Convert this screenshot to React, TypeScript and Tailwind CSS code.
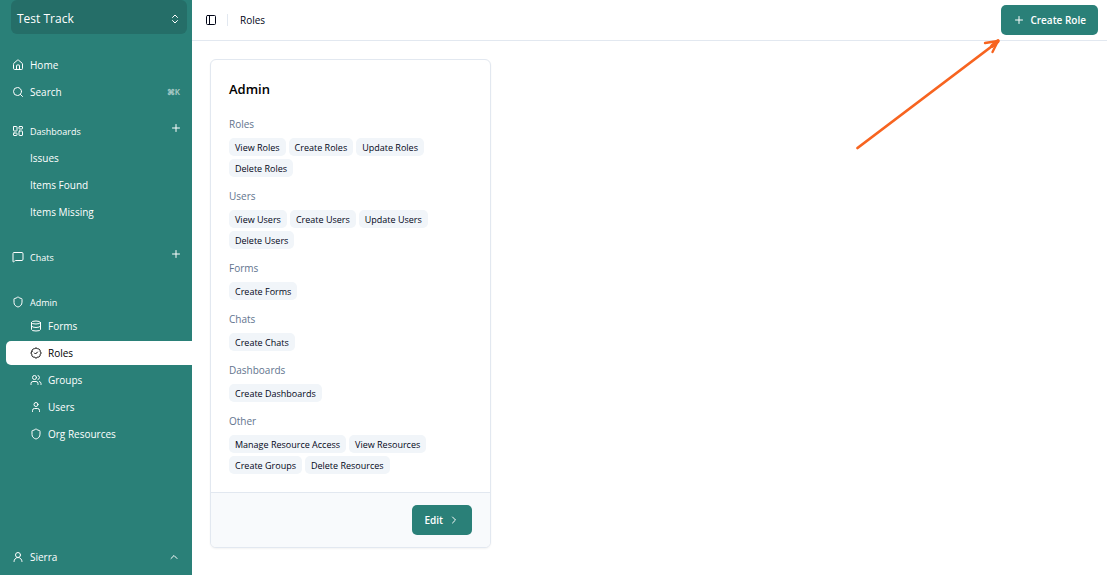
import type { ReactNode } from "react";
import {
  BadgeCheck,
  ChevronRight,
  ChevronUp,
  ChevronsUpDown,
  Database,
  House,
  LayoutDashboard,
  MessageSquare,
  PanelLeft,
  Plus,
  Search,
  Shield,
  User,
  UserRound,
  Users,
  type LucideIcon,
} from "lucide-react";

type Section = { label: string; permissions: string[] };

const sections: Section[] = [
  { label: "Roles", permissions: ["View Roles", "Create Roles", "Update Roles", "Delete Roles"] },
  { label: "Users", permissions: ["View Users", "Create Users", "Update Users", "Delete Users"] },
  { label: "Forms", permissions: ["Create Forms"] },
  { label: "Chats", permissions: ["Create Chats"] },
  { label: "Dashboards", permissions: ["Create Dashboards"] },
  {
    label: "Other",
    permissions: ["Manage Resource Access", "View Resources", "Create Groups", "Delete Resources"],
  },
];

const adminLinks: { label: string; icon: LucideIcon; active?: boolean }[] = [
  { label: "Forms", icon: Database },
  { label: "Roles", icon: BadgeCheck, active: true },
  { label: "Groups", icon: Users },
  { label: "Users", icon: User },
  { label: "Org Resources", icon: Shield },
];

function NavLink({ icon: Icon, children, hint }: { icon: LucideIcon; children: ReactNode; hint?: string }) {
  return (
    <a href="#" className="flex h-6 items-center gap-1.5 px-1.5">
      <Icon className="size-3" />
      <span>{children}</span>
      {hint && <kbd className="ml-auto font-sans text-[8px] font-semibold opacity-60">{hint}</kbd>}
    </a>
  );
}

function GroupHeading({ icon: Icon, label, addLabel }: { icon: LucideIcon; label: string; addLabel?: string }) {
  return (
    <div className="flex h-6 items-center gap-1.5 pl-1.5 pr-1">
      <Icon className="size-3" />
      <h2 className="pt-px text-[9px]">{label}</h2>
      {addLabel && (
        <button type="button" aria-label={addLabel} className="mb-1.5 ml-auto">
          <Plus className="size-3" />
        </button>
      )}
    </div>
  );
}

function Sidebar() {
  return (
    <aside className="flex w-48 shrink-0 flex-col bg-[#2a8078] pl-1.5 text-[10px] font-medium text-white">
      <button
        type="button"
        className="mr-[5px] ml-[5px] flex h-[34px] items-center justify-between rounded-md bg-[#256e68] px-1.5 pt-1 text-[12px] font-normal"
      >
        <span>Test Track</span>
        <ChevronsUpDown className="size-3" />
      </button>

      <nav className="mt-[19px] flex flex-col">
        <div className="flex flex-col gap-[3px] pr-1.5">
          <NavLink icon={House}>Home</NavLink>
          <NavLink icon={Search} hint="⌘K">
            Search
          </NavLink>
        </div>

        <div className="mt-[15px] pr-1.5">
          <GroupHeading icon={LayoutDashboard} label="Dashboards" addLabel="Add dashboard" />
          <ul className="mt-[3px] flex flex-col gap-[3px]">
            {["Issues", "Items Found", "Items Missing"].map((item) => (
              <li key={item}>
                <a href="#" className="flex h-6 items-center pl-6">
                  {item}
                </a>
              </li>
            ))}
          </ul>
        </div>

        <div className="mt-[21px] pr-1.5">
          <GroupHeading icon={MessageSquare} label="Chats" addLabel="Add chat" />
        </div>

        <div className="mt-[21px]">
          <GroupHeading icon={Shield} label="Admin" />
          <ul className="flex flex-col gap-[3px]">
            {adminLinks.map(({ label, icon: Icon, active }) => (
              <li key={label}>
                <a
                  href="#"
                  aria-current={active ? "page" : undefined}
                  className={
                    active
                      ? "flex h-6 items-center gap-1.5 rounded-l-[5px] bg-white pl-6 text-black"
                      : "flex h-6 items-center gap-1.5 pl-6"
                  }
                >
                  <Icon className="size-3" />
                  {label}
                </a>
              </li>
            ))}
          </ul>
        </div>
      </nav>

      <button type="button" className="mt-auto mr-1.5 mb-1.5 flex h-6 items-center gap-1.5 px-1.5">
        <UserRound className="size-3" />
        <span>Sierra</span>
        <ChevronUp className="ml-auto size-3" />
      </button>
    </aside>
  );
}

function RoleCard() {
  return (
    <article className="overflow-hidden rounded-md border border-slate-200 bg-white shadow-xs">
      <div className="flex flex-col gap-[18px] p-[18px]">
        <h2 className="pt-px text-[13px] leading-[20px] font-semibold text-black">Admin</h2>
        <div className="flex flex-col gap-3">
          {sections.map(({ label, permissions }) => (
            <section key={label} className="flex flex-col gap-1.5">
              <h3 className="text-[10px] leading-[15px] text-slate-500">{label}</h3>
              <ul className="flex flex-wrap gap-[3px]">
                {permissions.map((permission) => (
                  <li
                    key={permission}
                    className="flex h-[18px] items-center rounded-[5px] bg-slate-100 px-1.5 pt-px text-[9px] text-slate-950"
                  >
                    {permission}
                  </li>
                ))}
              </ul>
            </section>
          ))}
        </div>
      </div>
      <footer className="flex justify-end border-t border-slate-200 bg-slate-50 px-[18px] py-3">
        <button
          type="button"
          className="flex h-[30px] items-center gap-[5px] rounded-[5px] bg-[#2a8078] px-3 text-[10px] font-semibold text-white"
        >
          Edit
          <ChevronRight className="size-3" />
        </button>
      </footer>
    </article>
  );
}

export default function App() {
  return (
    <div className="flex min-h-screen bg-white font-['Open_Sans','Noto_Sans',sans-serif] text-slate-950">
      <Sidebar />
      <div className="relative flex min-w-0 flex-1 flex-col">
        <header className="flex h-[41px] items-center border-b border-slate-200 pr-[9px] pl-[13px]">
          <button type="button" aria-label="Toggle sidebar">
            <PanelLeft className="size-3" />
          </button>
          <span className="ml-2.5 h-3 w-px bg-slate-200" />
          <h1 className="ml-3 text-[10px] leading-[15px]">Roles</h1>
          <button
            type="button"
            className="ml-auto flex h-[30px] items-center gap-[5px] rounded-[5px] bg-[#2a8078] px-3 text-[10px] font-semibold text-white"
          >
            <Plus className="size-3" />
            Create Role
          </button>
        </header>
        <main className="grid grid-cols-3 items-start gap-[18px] p-[18px]">
          <RoleCard />
        </main>
        <svg
          aria-hidden="true"
          viewBox="0 0 150 116"
          className="pointer-events-none absolute top-[36px] right-[104px] h-[116px] w-[150px] fill-none stroke-[#f76420]"
          strokeWidth="2.8"
          strokeLinecap="round"
          strokeLinejoin="round"
        >
          <path d="M4.500 112 144.500 6" />
          <path d="M132 7 145 5 139.500 16" strokeWidth="2.400" />
          <path d="M139 10 145 5" strokeWidth="3.600" />
        </svg>
      </div>
    </div>
  );
}
